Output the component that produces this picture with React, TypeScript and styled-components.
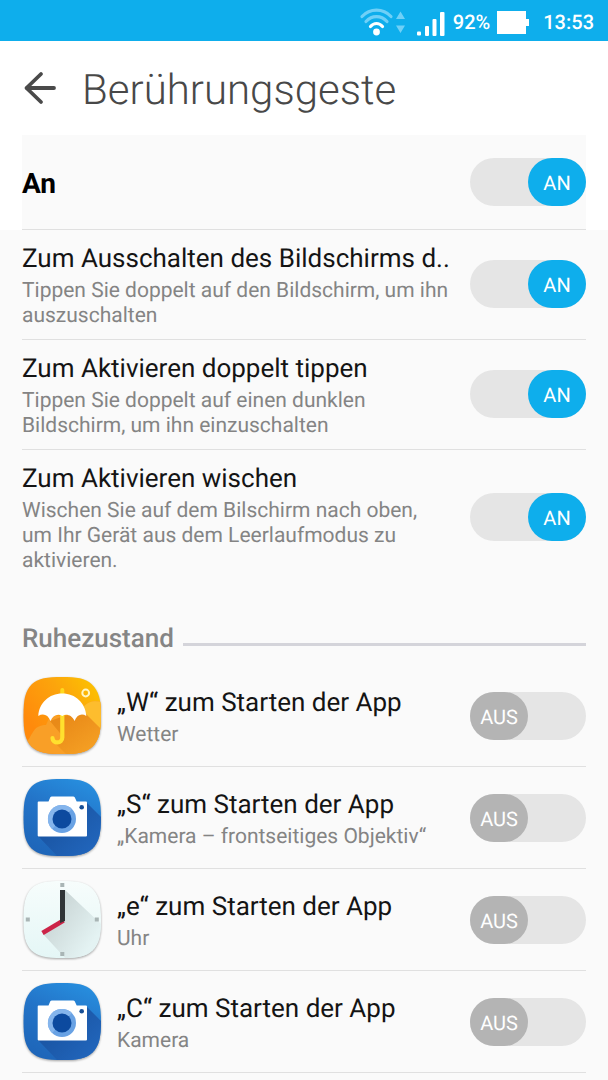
import React, { useId, useState } from 'react';
import styled, { createGlobalStyle } from 'styled-components';

const GlobalStyle = createGlobalStyle`
  * { box-sizing: border-box; }
  body {
    margin: 0;
    background: #fafafa;
    font-family: Roboto, "Noto Sans", sans-serif;
    text-rendering: geometricPrecision;
    color: #141414;
  }
  h1, h2, p { margin: 0; font-weight: 400; }
`;

const Page = styled.div`
  min-height: 100vh;
  background: #fafafa;
`;

const StatusBar = styled.div`
  display: flex;
  align-items: center;
  justify-content: flex-end;
  height: 41px;
  padding: 2px 14px 0 0;
  background: #0eaeec;
  color: #fff;
  font-size: 20px;
  line-height: 24px;
  font-weight: 500;
`;

const StatusIcons = styled.svg`
  display: block;
  width: 86px;
  height: 40px;
  margin-right: 8px;
`;

const BatteryIcon = styled.svg`
  display: block;
  width: 34px;
  height: 40px;
  margin: 0 13px 0 6px;
`;

const TopArea = styled.div`
  padding: 0 22px;
  background: #fff;
`;

const Header = styled.header`
  display: flex;
  align-items: center;
  gap: 24px;
  height: 94px;
`;

const BackButton = styled.button`
  display: block;
  width: 36px;
  height: 36px;
  padding: 0;
  border: 0;
  background: none;
  color: #4a4a4a;
  cursor: pointer;
`;

const Title = styled.h1`
  padding-top: 6px;
  color: #484848;
  font-size: 42px;
  line-height: 52px;
  && { font-weight: 300; }
`;

const List = styled.div`
  padding: 0 22px;
`;

const Row = styled.div<{ $height?: number; $divider?: boolean }>`
  display: flex;
  align-items: center;
  gap: 15px;
  min-height: ${(p) => p.$height ?? 110}px;
  padding: 9px 0 10px;
  background: #fafafa;
  border-bottom: ${(p) => (p.$divider === false ? '0' : '1px solid #e0e0e0')};
`;

const AppRow = styled(Row)`
  min-height: 102px;
  padding: 0;
`;

const Labels = styled.div`
  display: flex;
  flex: 1;
  flex-direction: column;
  gap: 4px;
  min-width: 0;
  padding: 4px 5px 0 0;
`;

const RowTitle = styled.label<{ $strong?: boolean }>`
  font-size: ${(p) => (p.$strong ? 28 : 26)}px;
  line-height: 32px;
  font-weight: ${(p) => (p.$strong ? 700 : 400)};
  color: ${(p) => (p.$strong ? '#000' : '#141414')};
  white-space: nowrap;
`;

const RowText = styled.p`
  color: #848484;
  font-size: 21px;
  line-height: 25px;
`;

const SwitchTrack = styled.span<{ $on: boolean }>`
  position: relative;
  display: flex;
  flex: none;
  justify-content: ${(p) => (p.$on ? 'flex-end' : 'flex-start')};
  width: 116px;
  height: 48px;
  border-radius: 24px;
  background: #e5e5e5;
`;

const SwitchKnob = styled.span<{ $on: boolean }>`
  display: flex;
  align-items: center;
  justify-content: center;
  width: 58px;
  height: 48px;
  padding-top: 2px;
  border-radius: 24px;
  background: ${(p) => (p.$on ? '#0eaeec' : '#b4b4b4')};
  color: #fff;
  font-size: 20px;
  line-height: 24px;
`;

const SwitchInput = styled.input`
  position: absolute;
  inset: 0;
  width: 100%;
  height: 100%;
  margin: 0;
  appearance: none;
  border-radius: 24px;
  cursor: pointer;
`;

const SectionHeading = styled.div`
  display: flex;
  align-items: center;
  gap: 9px;
  height: 81px;
  padding: 29px 0 0;

  &::after {
    content: '';
    flex: 1;
    height: 3px;
    margin-top: 10px;
    background: #d4d4da;
  }
`;

const SectionTitle = styled.h2`
  color: #858585;
  font-size: 26px;
  line-height: 30px;
  && { font-weight: 500; }
`;

const AppIcon = styled.svg`
  display: block;
  flex: none;
  width: 80px;
  height: 80px;
  overflow: visible;
  filter: drop-shadow(0 1px 1px rgba(0, 0, 0, 0.35));
`;

const BODY =
  'M40 1C55 1 63 2 69.500 8C77 15 79 24 79 39.500C79 55 77 64 70.500 70.500C64 76.500 56 78 40 78C24 78 16 76.500 9.500 70.500C3 64 1.500 55 1.500 39.500C1.500 24 3 15 10 8C16.500 2 25 1 40 1Z';

function WeatherIcon() {
  const id = useId();
  return (
    <AppIcon viewBox="0 0 80 80" aria-hidden="true">
      <defs>
        <linearGradient id={id + 'g'} x1="0.1" y1="0.6" x2="0.9" y2="0">
          <stop offset="0" stopColor="#ff8a0c" />
          <stop offset="0.55" stopColor="#fca50c" />
          <stop offset="1" stopColor="#fcc400" />
        </linearGradient>
        <linearGradient id={id + 's'} x1="0.2" y1="0.2" x2="0.8" y2="0.9">
          <stop offset="0" stopColor="#e98a18" />
          <stop offset="1" stopColor="#f5a024" />
        </linearGradient>
        <clipPath id={id + 'c'}><path d={BODY} /></clipPath>
      </defs>
      <g clipPath={`url(#${id}c)`}>
        <rect width="80" height="80" fill={`url(#${id}g)`} />
        <path d="M0 68C7 66 8 60 11 56C14 51 18 49 24 49L28 40H60V33C66 24 74 25 80 26V80H0Z" fill="#f99f27" />
        <path d="M60 33C66 24 74 25 80 26V54L60 36Z" fill="#fdbd2e" />
        <path d="M62 36L80 54V80H46L33 67L42 62L28 45L42 40Z" fill={`url(#${id}s)`} />
      </g>
      <path d="M40.300 14V20" stroke="#ffd91f" strokeWidth="4" strokeLinecap="round" />
      <path d="M40.300 38V61.500C40.300 68 30.500 68 30.500 62" fill="none" stroke="#ffe02e" strokeWidth="4.200" strokeLinecap="round" />
      <path d="M16.300 40C17 27 27 17.500 40.300 17.500C53.500 17.500 63.500 27 64.300 40C60 37 55 38.500 52.500 45C50 39 44 37.500 40.300 40C36 37.500 31 39 28.500 45C26 38.500 21 37 16.300 40Z" fill="#fff" />
      <circle cx="63.700" cy="17" r="3.400" fill="none" stroke="#fff6c4" strokeWidth="2" />
    </AppIcon>
  );
}

function CameraIcon() {
  const id = useId();
  return (
    <AppIcon viewBox="0 0 80 80" aria-hidden="true">
      <defs>
        <linearGradient id={id + 'g'} x1="0.75" y1="0" x2="0.3" y2="1">
          <stop offset="0" stopColor="#278fdf" />
          <stop offset="0.45" stopColor="#2374c8" />
          <stop offset="1" stopColor="#1e65b8" />
        </linearGradient>
        <linearGradient id={id + 's'} x1="0.2" y1="0.2" x2="0.9" y2="0.8">
          <stop offset="0" stopColor="#1953a0" />
          <stop offset="1" stopColor="#2165bb" />
        </linearGradient>
        <clipPath id={id + 'c'}><path d={BODY} /></clipPath>
      </defs>
      <g clipPath={`url(#${id}c)`}>
        <rect width="80" height="80" fill={`url(#${id}g)`} />
        <path d="M65 25L80 40V80H37L16 58Z" fill={`url(#${id}s)`} />
      </g>
      <path d="M16.500 23.500H26.500L28.300 19.300Q28.800 18.500 29.800 18.500H51.200Q52.200 18.500 52.700 19.300L54.700 23.500H64Q65 23.500 65 24.500V57.500Q65 58.500 64 58.500H16.700Q15.700 58.500 15.700 57.500V24.500Q15.700 23.500 16.500 23.500Z" fill="#fff" />
      <circle cx="40" cy="41" r="14" fill="#69a2e4" />
      <path d="M40 27A14 14 0 0 1 49.900 31.100L30.100 50.900A14 14 0 0 1 40 27Z" fill="#85b5ec" />
      <circle cx="40" cy="41" r="9.500" fill="#0c4a9f" />
      <circle cx="59.700" cy="29.300" r="2.300" fill="#174f96" />
    </AppIcon>
  );
}

function ClockIcon() {
  const id = useId();
  return (
    <AppIcon viewBox="0 0 80 80" aria-hidden="true">
      <defs>
        <linearGradient id={id + 'g'} x1="0.5" y1="0" x2="0.5" y2="1">
          <stop offset="0" stopColor="#f7fdfc" />
          <stop offset="1" stopColor="#e4f6f6" />
        </linearGradient>
        <linearGradient id={id + 's'} x1="0.2" y1="0.3" x2="0.8" y2="0.8">
          <stop offset="0" stopColor="#cbd7d7" />
          <stop offset="1" stopColor="#e4f3f3" />
        </linearGradient>
        <clipPath id={id + 'c'}><path d={BODY} /></clipPath>
      </defs>
      <g clipPath={`url(#${id}c)`}>
        <rect width="80" height="80" fill={`url(#${id}g)`} />
        <path d="M43 10L80 45V80H45L21 54L40 42Z" fill={`url(#${id}s)`} />
      </g>
      <path d="M38.300 3H42.300V7H38.300ZM38.300 72H42.300V76H38.300ZM3.800 37.500H7.800V41.500H3.800ZM72.800 37.500H76.800V41.500H72.800Z" fill="#a9b5b5" />
      <path d="M41.500 40.500L20.500 53" stroke="#cc2448" strokeWidth="4.600" />
      <path d="M38 10H43V41L38 43Z" fill="#303436" />
    </AppIcon>
  );
}

function Switch({ id, initial }: { id: string; initial: boolean }) {
  const [on, setOn] = useState(initial);
  return (
    <SwitchTrack $on={on}>
      <SwitchKnob $on={on} aria-hidden="true">{on ? 'AN' : 'AUS'}</SwitchKnob>
      <SwitchInput id={id} type="checkbox" role="switch" checked={on} onChange={(e) => setOn(e.target.checked)} />
    </SwitchTrack>
  );
}

const gestures = [
  { id: 'screen-off', title: 'Zum Ausschalten des Bildschirms d..', text: 'Tippen Sie doppelt auf den Bildschirm, um ihn auszuschalten' },
  { id: 'screen-on', title: 'Zum Aktivieren doppelt tippen', text: 'Tippen Sie doppelt auf einen dunklen Bildschirm, um ihn einzuschalten' },
  { id: 'swipe-on', title: 'Zum Aktivieren wischen', text: 'Wischen Sie auf dem Bilschirm nach oben, um Ihr Gerät aus dem Leerlaufmodus zu aktivieren.' },
];

const apps = [
  { id: 'app-w', title: '„W“ zum Starten der App', text: 'Wetter', Icon: WeatherIcon },
  { id: 'app-s', title: '„S“ zum Starten der App', text: '„Kamera – frontseitiges Objektiv“', Icon: CameraIcon },
  { id: 'app-e', title: '„e“ zum Starten der App', text: 'Uhr', Icon: ClockIcon },
  { id: 'app-c', title: '„C“ zum Starten der App', text: 'Kamera', Icon: CameraIcon },
];

export default function App() {
  return (
    <Page>
      <GlobalStyle />
      <StatusBar>
        <StatusIcons viewBox="0 0 86 40" aria-hidden="true">
          <g fill="none" strokeLinecap="round" strokeWidth="3.200">
            <path d="M3 14.500C11 6 24 6 32 14.500" stroke="#6fd0f7" />
            <path d="M7 19.500C13 13 22 13 28 19.500" stroke="#6fd0f7" />
            <path d="M11.500 24.500C15 20.500 20 20.500 23.500 24.500" stroke="#fff" />
          </g>
          <circle cx="17.500" cy="30" r="3.400" fill="#fff" />
          <path d="M41.500 9.500L46 17H37ZM41.500 31L46 23.500H37Z" fill="#6fd0f7" />
          <g fill="#fff">
            <rect x="58" y="29.500" width="4" height="4" rx="1" />
            <rect x="66" y="24" width="4" height="10" rx="1" />
            <rect x="73.500" y="17" width="4" height="17" rx="1" />
            <rect x="81" y="10" width="4.500" height="24" rx="1" />
          </g>
        </StatusIcons>
        <span>92%</span>
        <BatteryIcon viewBox="0 0 34 40" aria-hidden="true">
          <path d="M1 9H30V17H33V24H30V32H1Z" fill="#fff" />
        </BatteryIcon>
        <span>13:53</span>
      </StatusBar>
      <TopArea>
        <Header>
          <BackButton type="button" aria-label="Zurück">
            <svg viewBox="0 0 36 36" width="36" height="36" fill="none" stroke="currentColor" strokeWidth="3.800" strokeLinecap="round" strokeLinejoin="round">
              <path d="M32 18H4.500M19 4L4.500 18L19 32" />
            </svg>
          </BackButton>
          <Title>Berührungsgeste</Title>
        </Header>
        <Row $height={95}>
          <Labels>
            <RowTitle $strong htmlFor="master">An</RowTitle>
          </Labels>
          <Switch id="master" initial />
        </Row>
      </TopArea>
      <List>
        {gestures.map((g, i) => (
          <Row key={g.id} $divider={i < gestures.length - 1}>
            <Labels>
              <RowTitle htmlFor={g.id}>{g.title}</RowTitle>
              <RowText>{g.text}</RowText>
            </Labels>
            <Switch id={g.id} initial />
          </Row>
        ))}
        <SectionHeading>
          <SectionTitle>Ruhezustand</SectionTitle>
        </SectionHeading>
        {apps.map(({ id, title, text, Icon }) => (
          <AppRow key={id}>
            <Icon />
            <Labels>
              <RowTitle htmlFor={id}>{title}</RowTitle>
              <RowText>{text}</RowText>
            </Labels>
            <Switch id={id} initial={false} />
          </AppRow>
        ))}
      </List>
    </Page>
  );
}
